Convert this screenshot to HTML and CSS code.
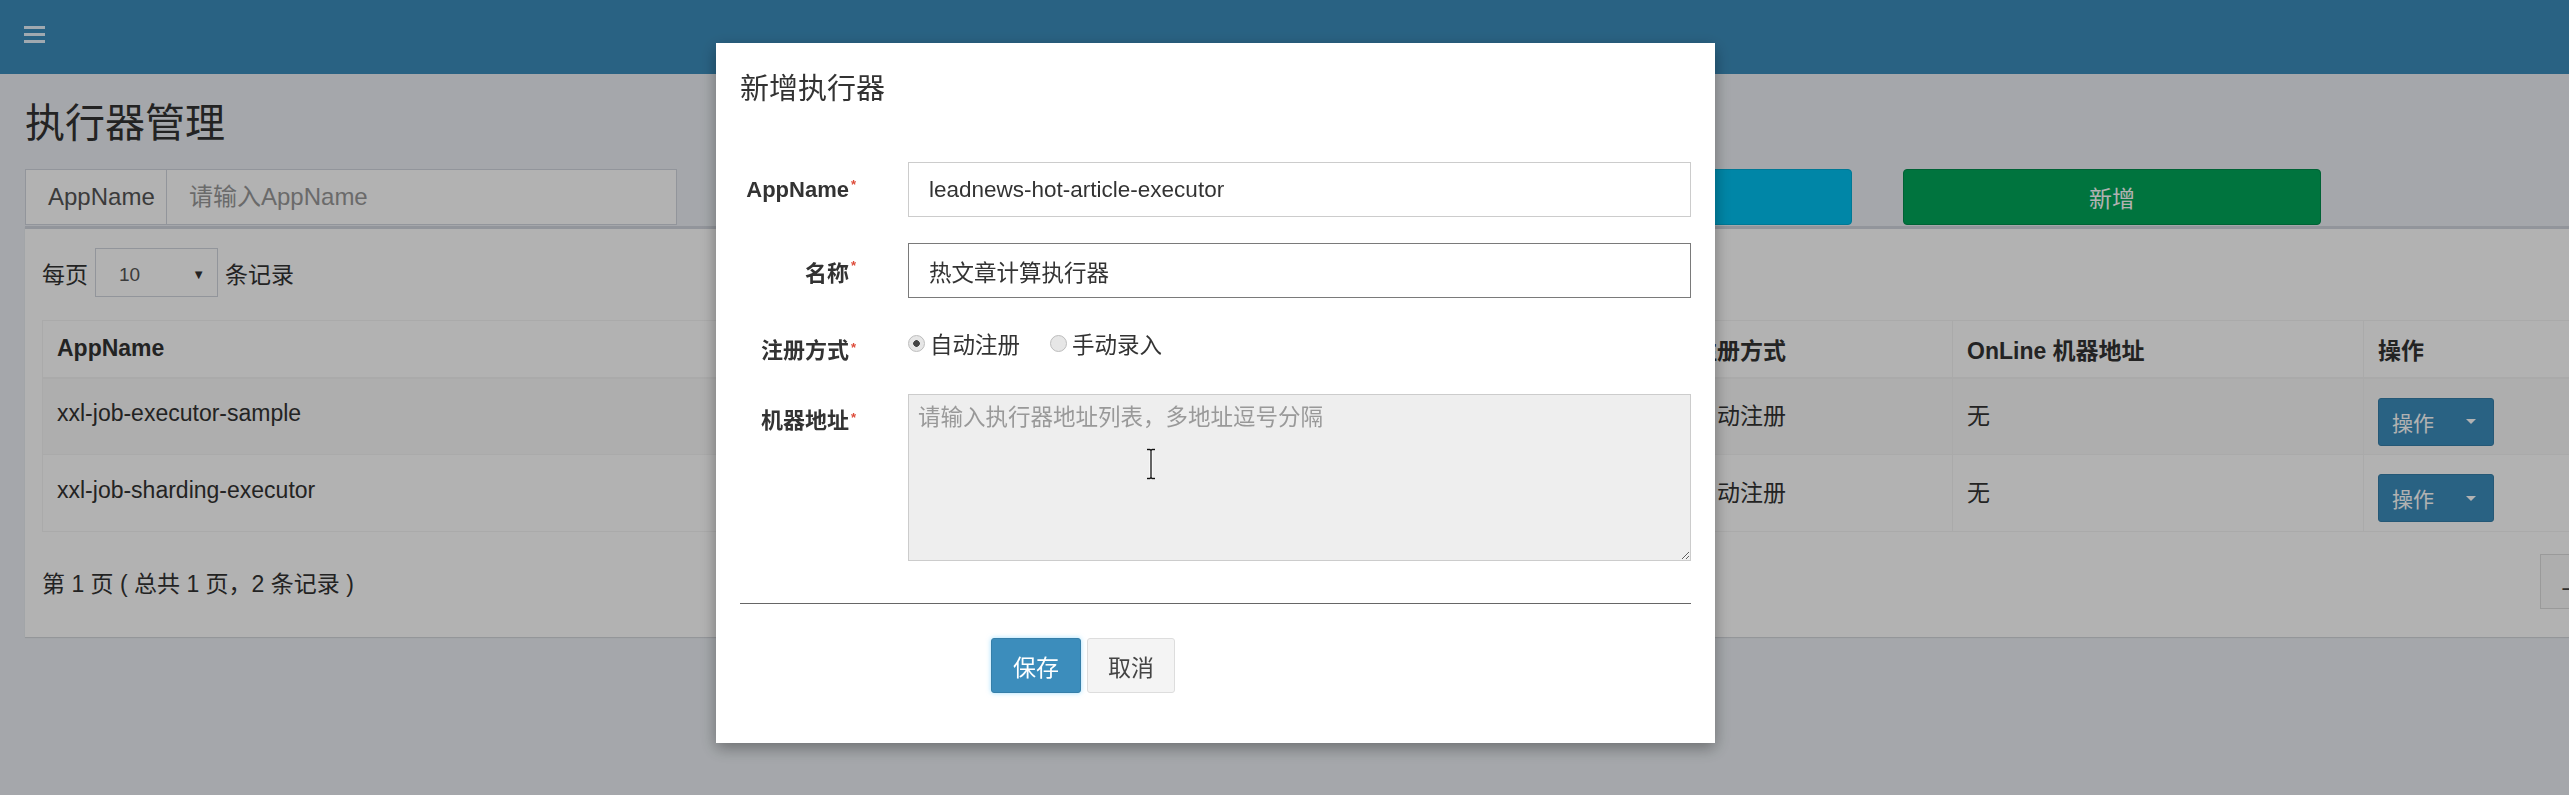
FILE: index.html
```html
<!DOCTYPE html>
<html lang="zh-CN">
<head>
<meta charset="utf-8">
<title>执行器管理</title>
<link rel="stylesheet" href="styles.css">
</head>
<body>
<header class="navbar">
  <a class="sidebar-toggle" href="#" aria-label="菜单">
    <svg width="21" height="17" viewBox="0 0 21 17"><rect y="0" width="21" height="3"/><rect y="7" width="21" height="3"/><rect y="14" width="21" height="3"/></svg>
  </a>
</header>

<main class="content">
  <h1 class="page-title">执行器管理</h1>

  <div class="filters">
    <div class="input-group"><span class="addon">AppName</span><input class="filter-input" type="text" placeholder="请输入AppName"></div>
    <div class="input-group"><span class="addon">名称</span><input class="filter-input" type="text" placeholder="请输入名称"></div>
    <button class="btn btn-info">搜索</button>
    <button class="btn btn-success">新增</button>
  </div>

  <section class="box">
    <div class="length-row">
      <span>每页</span>
      <div class="select"><span>10</span><span class="tri">▼</span></div>
      <span>条记录</span>
    </div>

    <table class="table">
      <colgroup><col class="c1"><col class="c2"><col class="c3"><col class="c4"><col class="c5"></colgroup>
      <thead>
        <tr><th>AppName</th><th>名称</th><th>注册方式</th><th>OnLine 机器地址</th><th>操作</th></tr>
      </thead>
      <tbody>
        <tr class="odd"><td>xxl-job-executor-sample</td><td>示例执行器</td><td>自动注册</td><td>无</td><td class="op"><button class="btn-op">操作<span class="caret"></span></button></td></tr>
        <tr><td>xxl-job-sharding-executor</td><td>分片执行器</td><td>自动注册</td><td>无</td><td class="op"><button class="btn-op">操作<span class="caret"></span></button></td></tr>
      </tbody>
    </table>

    <div class="pager-row">
      <span>第 1 页 ( 总共 1 页，2 条记录 )</span>
      <ul class="pagination"><li>上页</li><li class="active">1</li><li>下页</li></ul>
    </div>
  </section>
</main>

<div class="backdrop"></div>

<div class="modal">
  <h4 class="modal-title">新增执行器</h4>
  <form class="modal-form">
    <div class="form-group">
      <label class="control-label"><span>AppName</span><span class="req">*</span></label>
      <input class="form-control" type="text" value="leadnews-hot-article-executor">
    </div>
    <div class="form-group">
      <label class="control-label"><span>名称</span><span class="req">*</span></label>
      <input class="form-control focus" type="text" value="热文章计算执行器">
    </div>
    <div class="form-group">
      <label class="control-label top"><span>注册方式</span><span class="req">*</span></label>
      <div class="radios">
        <label class="radio"><input type="radio" name="addressType" checked>自动注册</label>
        <label class="radio"><input type="radio" name="addressType">手动录入</label>
      </div>
    </div>
    <div class="form-group">
      <label class="control-label top"><span>机器地址</span><span class="req">*</span></label>
      <div class="textarea-wrap">
        <textarea class="form-textarea" placeholder="请输入执行器地址列表，多地址逗号分隔" readonly></textarea>
        <svg class="ibeam" width="12" height="32" viewBox="0 0 12 32"><path d="M2 1.5h3l1 1 1-1h3M6 2.5v27M2 30.5h3l1-1 1 1h3" stroke="#fff" stroke-width="3" fill="none"/><path d="M2 1.5h3l1 1 1-1h3M6 2.5v27M2 30.5h3l1-1 1 1h3" stroke="#111" stroke-width="1.3" fill="none"/></svg>
      </div>
    </div>
    <div class="modal-divider"></div>
    <div class="modal-actions">
      <button type="button" class="btn-save">保存</button>
      <button type="button" class="btn-cancel">取消</button>
    </div>
  </form>
</div>
</body>
</html>
```

FILE: styles.css
```css
html, body {
  margin: 0;
  overflow: hidden;
}

body {
  width: 2569px;
  height: 795px;
  background: #ecf0f5;
  font-family: "Liberation Sans", "Noto Sans CJK SC", sans-serif;
  font-size: 23px;
  color: #333;
}

button, input, textarea {
  font-family: inherit;
}

/* ---------- navbar ---------- */
.navbar {
  height: 74px;
  box-sizing: border-box;
  background: #3c8dbc;
  padding: 26px 0 0 24px;
}

.sidebar-toggle svg {
  display: block;
  fill: #e6f3fc;
}

/* ---------- content ---------- */
.content {
  width: 2761px;
  padding: 29px 0 0 25px;
}

.page-title {
  margin: 0 0 26px;
  font-size: 40px;
  line-height: 40px;
  font-weight: normal;
  color: #333;
}

.filters {
  display: grid;
  grid-template-columns: 652px 652px 421px 418px;
  column-gap: 51px;
  height: 55px;
}

.input-group {
  display: flex;
  border: 1px solid #d2d6de;
  background: #fff;
}

.addon {
  width: 141px;
  box-sizing: border-box;
  padding-left: 22px;
  border-right: 1px solid #d2d6de;
  font-size: 24px;
  line-height: 53px;
  color: #555;
}

.filter-input {
  flex: 1;
  min-width: 0;
  border: none;
  outline: none;
  padding: 0 22px;
  font-size: 24px;
  color: #555;
  background: #fff;
}

.filter-input::placeholder {
  color: #999;
}

.btn {
  height: 56px;
  border-radius: 4px;
  font-size: 23px;
  color: #fff;
}

.btn-info {
  background: #00c0ef;
  border: 1px solid #00acd6;
}

.btn-success {
  background: #00a65a;
  border: 1px solid #008d4c;
}

/* ---------- box ---------- */
.box {
  margin-top: 2px;
  background: #fff;
  border-top: 3px solid #d2d6de;
  box-shadow: 0 1px 1px rgba(0, 0, 0, 0.1);
  padding: 19px 17px 28px;
}

.length-row {
  display: flex;
  align-items: center;
  gap: 7px;
  height: 49px;
}

.select {
  width: 123px;
  height: 49px;
  box-sizing: border-box;
  border: 1px solid #d2d6de;
  display: flex;
  align-items: center;
  justify-content: space-between;
  padding: 4px 12px 0 23px;
  font-size: 19px;
  color: #555;
}

.select .tri {
  font-size: 13px;
  color: #333;
}

.table {
  margin-top: 23px;
  width: 100%;
  border-collapse: collapse;
  table-layout: fixed;
}

.c1 { width: 700px; }
.c2 { width: 937px; }
.c3 { width: 273px; }
.c4 { width: 411px; }
.c5 { width: 406px; }

.table thead tr {
  height: 57px;
}

.table tbody tr {
  height: 77px;
}

.table th {
  padding: 0 14px;
  text-align: left;
  font-weight: bold;
  border: 1px solid #f4f4f4;
  border-bottom-width: 2px;
  white-space: nowrap;
}

.table td {
  padding: 0 14px 5px;
  border: 1px solid #f4f4f4;
  white-space: nowrap;
}

.table tr.odd td {
  background: #f9f9f9;
}

.table td.op {
  vertical-align: top;
  padding-top: 19px;
  padding-bottom: 0;
}

.btn-op {
  display: flex;
  align-items: center;
  justify-content: space-between;
  width: 116px;
  height: 48px;
  box-sizing: border-box;
  padding: 0 17px 0 13px;
  background: #3c8dbc;
  border: 1px solid #367fa9;
  border-radius: 3px;
  color: #fff;
  font-size: 21px;
}

.caret {
  width: 0;
  height: 0;
  border-top: 5px solid #fff;
  border-left: 5px solid transparent;
  border-right: 5px solid transparent;
}

.pager-row {
  margin-top: 22px;
  height: 55px;
  display: flex;
  align-items: center;
  justify-content: space-between;
}

.pagination {
  display: flex;
  margin: 0;
  padding: 0;
  list-style: none;
}

.pagination li {
  border: 1px solid #ddd;
  margin-left: -1px;
  padding: 0 20px;
  line-height: 53px;
  background: #fafafa;
  color: #444;
}

.pagination li.active {
  background: #3c8dbc;
  border-color: #367fa9;
  color: #fff;
}

/* ---------- modal ---------- */
.backdrop {
  position: fixed;
  inset: 0;
  background: rgba(0, 0, 0, 0.3);
}

.modal {
  position: fixed;
  left: 716px;
  top: 43px;
  width: 999px;
  box-sizing: border-box;
  padding: 0 24px 50px;
  background: #fff;
  box-shadow: 0 5px 15px rgba(0, 0, 0, 0.35);
}

.modal-title {
  margin: 0;
  padding-top: 31px;
  font-size: 29px;
  line-height: 30px;
  height: 30px;
  font-weight: normal;
  color: #333;
}

.modal-form {
  margin: 0;
  padding-top: 58px;
}

.form-group {
  display: grid;
  grid-template-columns: 116px 1fr;
  column-gap: 52px;
  margin-bottom: 26px;
}

.control-label {
  display: flex;
  justify-content: flex-end;
  align-items: center;
  height: 55px;
  font-weight: bold;
  font-size: 22px;
  white-space: nowrap;
  color: #333;
}

.control-label.top {
  align-items: flex-start;
  height: auto;
  line-height: 24px;
  padding-top: 15px;
}

.req {
  align-self: flex-start;
  color: #dd4b39;
  font-size: 13px;
  line-height: 13px;
  margin: 16px 0 0 2px;
}

.control-label.top .req {
  margin-top: 2px;
}

.form-control {
  width: 100%;
  height: 55px;
  box-sizing: border-box;
  border: 1px solid #ccc;
  padding: 0 20px;
  font-size: 22.5px;
  color: #333;
  outline: none;
}

.form-control.focus {
  border-color: #7a7a7a;
}

.radios {
  display: flex;
  align-items: center;
  height: 44px;
}

.radio {
  display: inline-flex;
  align-items: center;
  gap: 5px;
  margin-right: 30px;
  font-size: 22.5px;
  line-height: 24px;
  color: #333;
}

.radio input {
  appearance: none;
  -webkit-appearance: none;
  width: 17px;
  height: 17px;
  margin: -5px 0 0;
  border-radius: 50%;
  border: 1px solid #bdbdbd;
  background: #e6e6e6;
}

.radio input:checked {
  background: radial-gradient(circle, #444 0 3px, #e6e6e6 3.6px);
}

.textarea-wrap {
  position: relative;
}

.form-textarea {
  display: block;
  width: 100%;
  height: 167px;
  box-sizing: border-box;
  border: 1px solid #ccc;
  background: #eee;
  padding: 8px 9px;
  font-size: 22.5px;
  line-height: 30px;
  color: #333;
  resize: vertical;
  outline: none;
}

.form-textarea::placeholder {
  color: #999;
}

.ibeam {
  position: absolute;
  left: 237px;
  top: 54px;
}

.modal-divider {
  margin-top: 42px;
  border-top: 1px solid #666;
}

.modal-actions {
  margin-top: 34px;
  padding-left: 251px;
  display: flex;
  gap: 6px;
}

.btn-save,
.btn-cancel {
  height: 55px;
  border-radius: 3px;
  font-size: 23px;
}

.btn-save {
  width: 90px;
  background: #3c8dbc;
  border: 1px solid #367fa9;
  color: #fff;
  box-shadow: 0 0 5px rgba(102, 204, 255, 0.6);
}

.btn-cancel {
  width: 88px;
  background: #f4f4f4;
  border: 1px solid #ddd;
  color: #444;
}
```
